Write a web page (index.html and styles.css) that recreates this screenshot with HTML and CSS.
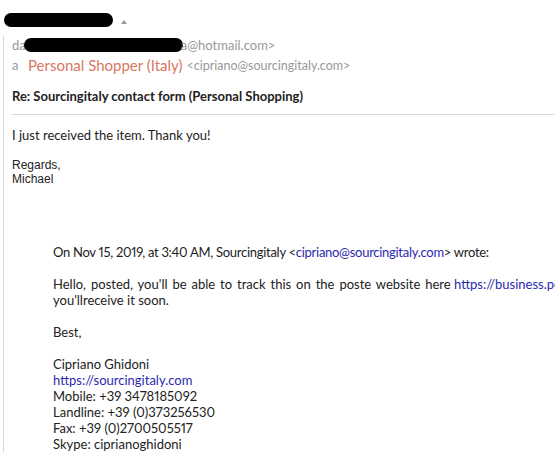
FILE: index.html
```html
<!DOCTYPE html>
<html>
<head>
<meta charset="utf-8">
<link rel="stylesheet" href="styles.css">
</head>
<body>
<div class="top">
  <span class="blob blob1"></span>
  <span class="caret"></span>
</div>
<div class="mail">
  <div class="from"><span>da</span><span class="blob blob2"></span><span>a@hotmail.com&gt;</span></div>
  <div class="to"><span class="lbl">a</span><span class="name">Personal Shopper (Italy)</span><span class="addr">&lt;cipriano@sourcingitaly.com&gt;</span></div>
  <div class="subject">Re: Sourcingitaly contact form (Personal Shopping)</div>
  <div class="sep"></div>
  <div class="body">
    <p class="first">I just received the item. Thank you!</p>
    <p class="arial">Regards,<br>Michael</p>
    <div class="quote">
      <p class="narrow">On Nov 15, 2019, at 3:40 AM, Sourcingitaly &lt;<span class="link">cipriano@sourcingitaly.com</span>&gt; wrote:</p>
      <p><span class="wide">Hello, posted, you'll be able to track this on the poste website here</span> <span class="link">https://business.poste.it/track</span><br>you'llreceive it soon.</p>
      <p>Best,</p>
      <p>Cipriano Ghidoni<br><span class="link">https://sourcingitaly.com</span><br>Mobile: +39 3478185092<br>Landline: +39 (0)373256530<br>Fax: +39 (0)2700505517<br>Skype: ciprianoghidoni</p>
    </div>
  </div>
</div>
</body>
</html>
```
FILE: styles.css
```css
html, body {
  margin: 0;
  padding: 0;
  background: #fff;
  overflow: hidden;
}
body {
  font-family: Lato, "Liberation Sans", sans-serif;
  font-size: 13px;
  font-variant-numeric: proportional-nums;
  color: #222;
  width: 555px;
  height: 452px;
}
.top {
  height: 36px;
  display: flex;
  align-items: flex-start;
  padding-left: 4px;
  padding-top: 13px;
  box-sizing: border-box;
}
.blob {
  display: inline-block;
  background: #000;
  border-radius: 8px;
}
.blob1 {
  width: 109px;
  height: 14px;
}
.caret {
  width: 0;
  height: 0;
  border-left: 3px solid transparent;
  border-right: 3px solid transparent;
  border-bottom: 4px solid #999;
  margin-left: 8px;
  margin-top: 7px;
}
.mail {
  border-left: 1px solid #d8d8d8;
  margin-left: 3px;
  padding-left: 8px;
  height: 416px;
  white-space: nowrap;
}
.from {
  color: #999;
  height: 18px;
  line-height: 18px;
  display: flex;
  align-items: center;
}
.blob2 {
  width: 159px;
  height: 14px;
  margin-left: -2px;
  margin-right: -2px;
  border-radius: 7px;
}
.to {
  height: 22px;
  display: flex;
  align-items: center;
  color: #999;
}
.lbl {
  width: 16px;
}
.name {
  color: #d9775f;
  font-size: 15px;
  margin-right: 4px;
}
.addr {
  font-size: 12.5px;
}
.subject {
  font-weight: bold;
  color: #222;
  padding-top: 11px;
  height: 18px;
  line-height: 18px;
}
.sep {
  height: 1px;
  background: #d8d8d8;
  margin-top: 9px;
}
.body p {
  margin: 0;
}
.body .first {
  margin-top: 12px;
  line-height: 16px;
}
.arial {
  font-family: "Liberation Sans", Arial, sans-serif;
  font-size: 12px;
  line-height: 14px;
  margin-top: 15px !important;
}
.quote {
  margin-left: 41px;
  margin-top: 58px;
  line-height: 16px;
}
.quote p {
  margin-bottom: 16px !important;
}
.narrow {
  letter-spacing: -0.28px;
}
.wide {
  word-spacing: 1.6px;
}
.link {
  color: #2a2ab0;
}
```
